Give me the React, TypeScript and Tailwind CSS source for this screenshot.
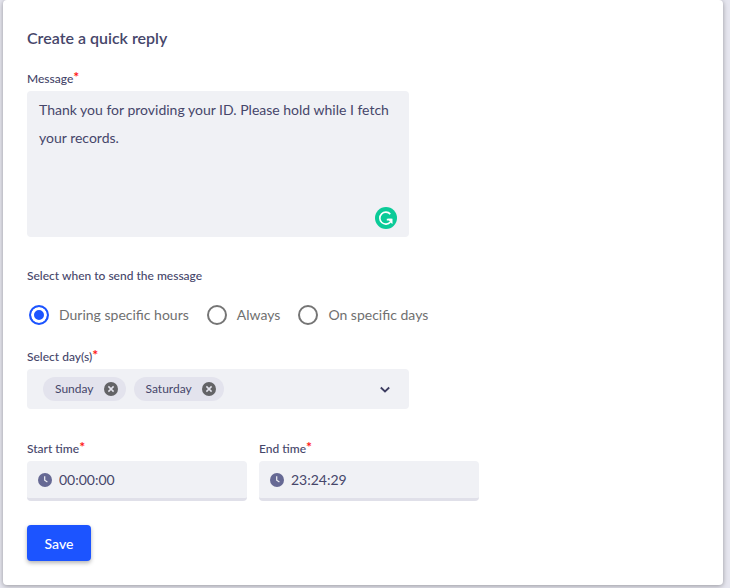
import { useState } from "react";
import type { ReactNode } from "react";

type FieldLabelProps = {
  htmlFor?: string;
  id?: string;
  children: ReactNode;
};

const schedules = [
  { value: "hours", label: "During specific hours" },
  { value: "always", label: "Always" },
  { value: "days", label: "On specific days" },
];

function FieldLabel({ htmlFor, id, children }: FieldLabelProps) {
  return (
    <label htmlFor={htmlFor} id={id} className="mb-[3px] flex text-[12px] leading-[18px] font-medium">
      {children}
      <span className="-mt-0.5 text-[14px] font-bold text-[#ff1a1a]">*</span>
    </label>
  );
}

function ClockIcon() {
  return (
    <svg viewBox="0 0 14 14" className="size-3.5 shrink-0" aria-hidden="true">
      <circle cx="7" cy="7" r="7" fill="#666994" />
      <path d="M6.7 3.2v4.1l2.7 1.8" fill="none" stroke="#f0f1f5" strokeWidth="1.2" />
    </svg>
  );
}

function GrammarIcon() {
  return (
    <svg viewBox="0 0 22 22" className="size-[22px]" aria-hidden="true">
      <circle cx="11" cy="11" r="11" fill="#0bcb98" />
      <path
        d="M15.3 7.1A6 6 0 1 0 15.4 15M11.8 12.6h4.9"
        fill="none"
        stroke="#fff"
        strokeWidth="1.6"
      />
      <path d="M13 11.8h4.5v5.2l-1.8-1.2z" fill="#fff" />
    </svg>
  );
}

function DayChip({ day, onRemove }: { day: string; onRemove: () => void }) {
  return (
    <span className="flex h-6 items-center gap-2.5 rounded-full bg-[#e3e3ed] pr-2 pl-3 text-[12px]">
      {day}
      <button type="button" aria-label={`Remove ${day}`} onClick={onRemove}>
        <svg viewBox="0 0 14 14" className="size-3.5" aria-hidden="true">
          <circle cx="7" cy="7" r="7" fill="#636366" />
          <path d="M4.4 4.4l5.2 5.2M9.6 4.4L4.4 9.6" stroke="#e3e3ed" strokeWidth="1.5" />
        </svg>
      </button>
    </span>
  );
}

function TimeField({ id, label, defaultValue }: { id: string; label: string; defaultValue: string }) {
  return (
    <div className="max-w-[220px] flex-1">
      <FieldLabel htmlFor={id}>{label}</FieldLabel>
      <div className="flex h-10 items-center gap-[7px] rounded border-b-3 border-[#e0e0e9] bg-[#f0f1f5] px-[11px]">
        <ClockIcon />
        <input id={id} defaultValue={defaultValue} className="w-full min-w-0 bg-transparent text-[14px] outline-none" />
      </div>
    </div>
  );
}

export default function App() {
  const [message, setMessage] = useState(
    "Thank you for providing your ID. Please hold while I fetch your records."
  );
  const [schedule, setSchedule] = useState("hours");
  const [days, setDays] = useState(["Sunday", "Saturday"]);

  return (
    <div className="min-h-screen bg-[#e6e6ef] pr-[7px] pb-[3px] pl-[3px] font-['Lato','Liberation_Sans',sans-serif] text-[#46466a]">
      <form
        onSubmit={(event) => event.preventDefault()}
        className="rounded bg-white p-6 shadow-[0_1px_5px_rgba(0,0,0,0.35)]"
      >
        <h1 className="mb-[18px] text-[16px] leading-7 font-semibold">Create a quick reply</h1>

        <div className="max-w-[382px]">
          <FieldLabel htmlFor="message">Message</FieldLabel>
          <div className="relative">
            <textarea
              id="message"
              value={message}
              onChange={(event) => setMessage(event.target.value)}
              className="block h-[146px] w-full resize-none rounded bg-[#f0f1f5] px-3 py-[5px] text-[14px] leading-7 outline-none"
            />
            <span className="absolute right-3 bottom-2">
              <GrammarIcon />
            </span>
          </div>
        </div>

        <fieldset className="mt-[30px]">
          <legend className="text-[12px] leading-[18px] font-medium">Select when to send the message</legend>
          <div className="mt-[18px] ml-0.5 flex flex-wrap gap-x-[18px]">
            {schedules.map(({ value, label }) => (
              <label key={value} className="flex h-6 items-center gap-2.5 text-[14px] text-[#707070]">
                <input
                  type="radio"
                  name="schedule"
                  value={value}
                  checked={schedule === value}
                  onChange={() => setSchedule(value)}
                  className="size-5 appearance-none rounded-full border-2 border-[#757575] checked:border-[#1c54ff] checked:bg-[#1c54ff] checked:shadow-[inset_0_0_0_3px_white]"
                />
                <span className="pb-0.5">{label}</span>
              </label>
            ))}
          </div>
        </fieldset>

        <div className="mt-[21px] max-w-[382px]">
          <FieldLabel id="days-label">Select day(s)</FieldLabel>
          <div
            role="group"
            aria-labelledby="days-label"
            className="flex h-10 items-center gap-2 rounded bg-[#f0f1f5] px-4"
          >
            {days.map((day) => (
              <DayChip key={day} day={day} onRemove={() => setDays(days.filter((item) => item !== day))} />
            ))}
            <button type="button" aria-label="Show days" className="ml-auto">
              <svg viewBox="0 0 16 16" className="size-4" aria-hidden="true">
                <path d="M3.8 6.5L8 10.5l4.2-4" fill="none" stroke="#3d3d61" strokeWidth="1.8" />
              </svg>
            </button>
          </div>
        </div>

        <div className="mt-[31px] flex gap-3">
          <TimeField id="start-time" label="Start time" defaultValue="00:00:00" />
          <TimeField id="end-time" label="End time" defaultValue="23:24:29" />
        </div>

        <button
          type="submit"
          className="mt-6 block h-9 min-w-16 rounded bg-[#1c54ff] px-4 text-[14px] font-medium text-white shadow-[0_2px_4px_rgba(0,0,0,0.3)]"
        >
          Save
        </button>
      </form>
    </div>
  );
}
